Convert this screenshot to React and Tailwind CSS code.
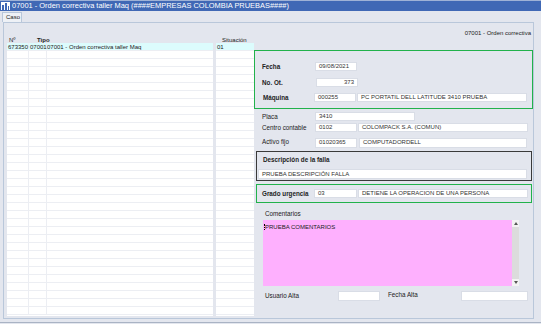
import React from "react";

const F = { fontFamily: '"Liberation Sans", Arial, sans-serif' };

function Inp({ w, children, right, className = "" }) {
  return (
    <div
      className={`h-[9px] bg-white border border-[#d9dde6] text-[6px] leading-[7px] px-[3px] text-[#333] whitespace-nowrap overflow-hidden ${right ? "text-right" : ""} ${className}`}
      style={{ width: w }}
    >
      {children}
    </div>
  );
}

export default function App() {
  const rows = Array.from({ length: 33 });
  return (
    <div className="w-[541px] h-[324px] bg-[#e3e6ee] overflow-hidden relative text-[#222]" style={F}>
      {/* title bar */}
      <div className="h-[11px] bg-[#4068b5] flex items-center pl-[1px] border-t border-[#9fb2d6]">
        <svg width="9" height="8" viewBox="0 0 9 8" className="mr-[2px]">
          <rect x="0" y="0" width="9" height="8" fill="#ffffff" />
          <rect x="1" y="3" width="2" height="5" fill="#4068b5" />
          <rect x="4" y="1" width="2" height="7" fill="#4068b5" />
          <rect x="7" y="4" width="1" height="4" fill="#4068b5" />
        </svg>
        <span className="text-white text-[7.45px] leading-none whitespace-nowrap">
          07001 - Orden correctiva taller Maq (####EMPRESAS COLOMBIA PRUEBAS####)
        </span>
      </div>
      {/* tab row */}
      <div className="h-[11px] flex items-end pl-[2px]">
        <div className="w-[20px] h-[10px] bg-[#eef1f6] border border-b-0 border-[#b9c7da] text-[6px] leading-[9px] pl-[3px]">
          Caso
        </div>
      </div>
      {/* panel */}
      <div className="ml-[3px] w-[531px] h-[297px] border border-[#b9c7da] flex flex-col">
        <div className="h-[14px] flex justify-end items-end pr-[2px] text-[6px] leading-[8px]">
          07001 - Orden correctiva
        </div>
        <div className="flex flex-1">
          {/* grid */}
          <div className="w-[250px] ml-[3px] flex flex-col pb-[2px]">
            <div className="h-[6px] flex text-[6px] leading-[6px]">
              <div className="w-[22px] pl-[2px]">Nº</div>
              <div className="w-[18px]" />
              <div className="w-[167px] font-bold -ml-[12px] pl-[2px]">Tipo</div>
              <div className="w-[15px]" />
              <div className="pl-[5px]">Situación</div>
            </div>
            <div className="flex flex-1 overflow-hidden">
              <div className="w-[206px] bg-white flex flex-col">
                <div className="h-[8px] bg-[#dcfcfd] flex text-[6px] leading-[8px] border-b border-[#eceef3] shrink-0">
                  <div className="w-[22px] pl-[1px] border-r border-[#eceef3]">673350</div>
                  <div className="w-[18px] pl-[1px] border-r border-[#eceef3]">07001</div>
                  <div>07001 - Orden correctiva taller Maq</div>
                </div>
                {rows.map((_, i) => (
                  <div key={i} className="h-[8px] flex border-b border-[#eceef3] shrink-0">
                    <div className="w-[22px] border-r border-[#eceef3]" />
                    <div className="w-[18px] border-r border-[#eceef3]" />
                  </div>
                ))}
              </div>
              <div className="w-[3px] bg-[#e3e6ee]" />
              <div className="flex-1 bg-white flex flex-col">
                <div className="h-[8px] bg-[#dcfcfd] text-[6px] leading-[8px] pl-[1px] border-b border-[#eceef3] shrink-0">01</div>
                {rows.map((_, i) => (
                  <div key={i} className="h-[8px] border-b border-[#eceef3] shrink-0" />
                ))}
              </div>
            </div>
          </div>
          {/* form */}
          <div className="flex-1 flex flex-col pt-[13px] text-[6.3px]">
            <div className="w-[279px] h-[59px] border border-[#22b24c] flex flex-col pl-[7px] pt-[11px]">
              <div className="flex items-center h-[9px]">
                <div className="w-[53px] font-bold">Fecha</div>
                <Inp w={42}>09/08/2021</Inp>
              </div>
              <div className="flex items-center h-[9px] mt-[7px]">
                <div className="w-[54px] font-bold">No. Ot.</div>
                <Inp w={42} right>373</Inp>
              </div>
              <div className="flex items-center h-[9px] mt-[6px]">
                <div className="w-[52px] font-bold pl-[1px]">Máquina</div>
                <Inp w={42}>000255</Inp>
                <Inp w={170} className="ml-[1px]">PC PORTATIL DELL LATITUDE 3410 PRUEBA</Inp>
              </div>
            </div>
            <div className="flex flex-col pl-[8px] pt-[3px]">
              <div className="flex items-center h-[9px]">
                <div className="w-[53px]">Placa</div>
                <Inp w={100}>3410</Inp>
              </div>
              <div className="flex items-center h-[9px] mt-[2px]">
                <div className="w-[53px]">Centro contable</div>
                <Inp w={42}>0102</Inp>
                <Inp w={170} className="ml-[1px]">COLOMPACK S.A. (COMUN)</Inp>
              </div>
              <div className="flex items-center h-[10px] mt-[6px]">
                <div className="w-[53px] -mt-[3px]">Activo fijo</div>
                <Inp w={42} className="h-[10px]">01020365</Inp>
                <Inp w={168} className="ml-[2px] h-[10px]">COMPUTADORDELL</Inp>
              </div>
            </div>
            <div className="ml-[2px] mt-[3px] w-[276px] h-[30px] border border-[#3a3a3a] flex flex-col pl-[5px] pt-[4px]">
              <div className="font-bold leading-[8px] pl-[1px]">Descripción de la falla</div>
              <Inp w={269} className="mt-[5px] -ml-[4px] h-[10px] leading-[8px]">PRUEBA DESCRIPCIÓN FALLA</Inp>
            </div>
            <div className="ml-[2px] mt-[3px] w-[276px] h-[19px] border border-[#22b24c] flex items-center pl-[5px]">
              <div className="w-[52px] font-bold">Grado urgencia</div>
              <Inp w={43}>03</Inp>
              <Inp w={170} className="ml-[1px]">DETIENE LA OPERACION DE UNA PERSONA</Inp>
            </div>
            <div className="pl-[11px] mt-[7px] leading-[8px]">Comentarios</div>
            <div className="ml-[9px] mt-[2px] w-[256px] h-[66px] bg-[#feb0fe] flex">
              <div className="flex-1 pl-[1px] pt-[3px] leading-[8px] text-[6px]">
                <span className="border-l border-dotted border-black">PRUEBA COMENTARIOS</span>
              </div>
              <div className="w-[7px] bg-[#dcdcdc] flex flex-col justify-between">
                <div className="h-[7px] bg-[#f3f3f3] flex items-center justify-center">
                  <div className="w-0 h-0 border-l-[2.5px] border-r-[2.5px] border-b-[3px] border-l-transparent border-r-transparent border-b-[#555]" />
                </div>
                <div className="h-[7px] bg-[#f3f3f3] flex items-center justify-center">
                  <div className="w-0 h-0 border-l-[2.5px] border-r-[2.5px] border-t-[3px] border-l-transparent border-r-transparent border-t-[#555]" />
                </div>
              </div>
            </div>
            <div className="flex items-center mt-[5px] pl-[11px]">
              <div className="w-[73px]">Usuario Alta</div>
              <Inp w={42} className="h-[10px]" />
              <div className="w-[73px] ml-[8px] -mt-[2px]">Fecha Alta</div>
              <Inp w={67} className="h-[10px]" />
            </div>
          </div>
        </div>
      </div>
      <div className="h-[1px] bg-[#a9b3c4] mt-[3px]" />
    </div>
  );
}
